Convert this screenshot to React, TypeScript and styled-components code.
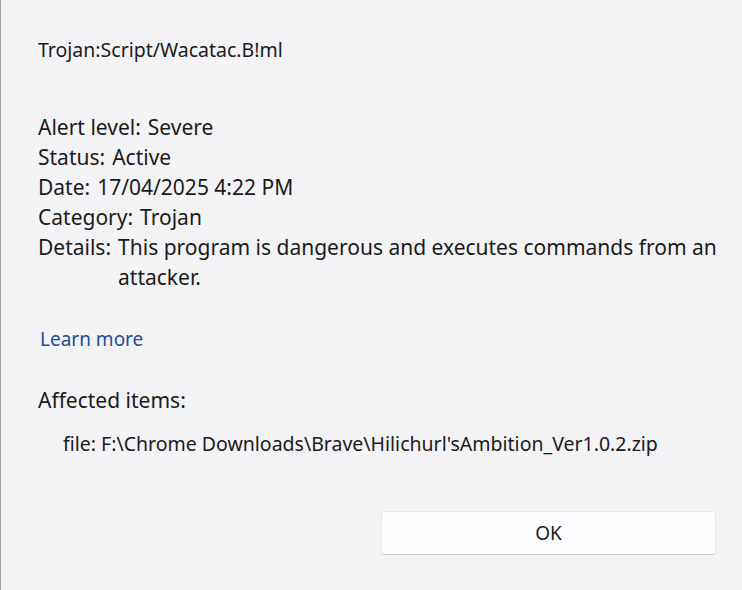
import React from "react";
import styled, { createGlobalStyle } from "styled-components";

const GlobalStyle = createGlobalStyle`
  html, body {
    margin: 0;
    padding: 0;
    background: #f3f2f5;
  }
  body {
    font-family: "Noto Sans", "Open Sans", sans-serif;
    color: #1b1b1b;
  }
`;

const Dialog = styled.div`
  box-sizing: border-box;
  width: 742px;
  height: 590px;
  border-left: 1px solid #a3a3a6;
  background: #f3f2f5;
  padding: 35px 20px 0 37px;
  display: flex;
  flex-direction: column;
`;

const Title = styled.div`
  font-size: 19.5px;
  line-height: 30px;
`;

const Details = styled.div`
  margin-top: 47px;
  display: flex;
  flex-direction: column;
`;

const Row = styled.div`
  display: flex;
  gap: 7px;
  font-size: 21px;
  line-height: 30px;
`;

const Label = styled.span`
  flex: none;
`;

const Value = styled.span`
  flex: 1;
`;

const LearnMore = styled.a`
  margin-top: 32px;
  font-size: 19px;
  line-height: 30px;
  color: #1c4f95;
  text-decoration: none;
  cursor: pointer;
  padding-left: 2px;
`;

const SectionTitle = styled.div`
  margin-top: 31px;
  font-size: 21px;
  line-height: 30px;
`;

const Item = styled.div`
  margin-top: 14px;
  padding-left: 25px;
  font-size: 19.5px;
  line-height: 30px;
`;

const Footer = styled.div`
  margin-top: 52px;
  padding-right: 6px;
  display: flex;
  justify-content: flex-end;
`;

const OkButton = styled.button`
  width: 335px;
  height: 44px;
  background: #fcfbfe;
  border: 1px solid #e6e5e8;
  border-bottom-color: #cfced1;
  border-radius: 3px;
  font-family: "Noto Sans", "Open Sans", sans-serif;
  font-size: 19px;
  color: #1b1b1b;
  cursor: pointer;
`;

const rows: [string, string][] = [
  ["Alert level:", "Severe"],
  ["Status:", "Active"],
  ["Date:", "17/04/2025 4:22 PM"],
  ["Category:", "Trojan"],
  ["Details:", "This program is dangerous and executes commands from an attacker."],
];

const App = () => {
  return (
    <>
      <GlobalStyle />
      <Dialog>
        <Title>Trojan:Script/Wacatac.B!ml</Title>
        <Details>
          {rows.map(([label, value]) => (
            <Row key={label}>
              <Label>{label}</Label>
              <Value>{value}</Value>
            </Row>
          ))}
        </Details>
        <LearnMore>Learn more</LearnMore>
        <SectionTitle>Affected items:</SectionTitle>
        <Item>file: F:\Chrome Downloads\Brave\Hilichurl'sAmbition_Ver1.0.2.zip</Item>
        <Footer>
          <OkButton>OK</OkButton>
        </Footer>
      </Dialog>
    </>
  );
};

export default App;
